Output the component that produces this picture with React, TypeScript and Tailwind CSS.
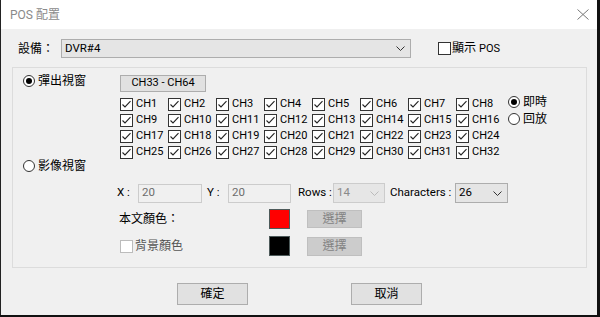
import React from "react";

const font = { fontFamily: 'Roboto, "Noto Sans CJK TC", "Noto Sans", sans-serif' };

function Check({ checked = true, disabled = false }: { checked?: boolean; disabled?: boolean }) {
  return (
    <div
      className={`w-[13px] h-[13px] shrink-0 bg-white border ${disabled ? "border-[#bcbcbc]" : "border-[#333]"} flex items-center justify-center`}
    >
      {checked && (
        <svg width="11" height="11" viewBox="0 0 11 11">
          <path d="M1.5 5.5 L4 8 L9.5 2.2" fill="none" stroke="#222" strokeWidth="1.1" />
        </svg>
      )}
    </div>
  );
}

function Radio({ checked = false }: { checked?: boolean }) {
  return (
    <div className="w-[12px] h-[12px] shrink-0 rounded-full bg-white border border-[#333] flex items-center justify-center">
      {checked && <div className="w-[6px] h-[6px] rounded-full bg-black" />}
    </div>
  );
}

function Chevron({ color = "#333" }: { color?: string }) {
  return (
    <svg width="9" height="5" viewBox="0 0 9 5">
      <path d="M0.5 0.5 L4.5 4.5 L8.5 0.5" fill="none" stroke={color} strokeWidth="1" />
    </svg>
  );
}

export default function App() {
  const chs = Array.from({ length: 32 }, (_, i) => i + 1);
  return (
    <div className="w-[600px] h-[317px] bg-[#111] overflow-hidden text-[12px] text-black whitespace-nowrap" style={font}>
      <div className="w-[597px] h-[315px] flex flex-col border-l border-[#222]">
        {/* title bar */}
        <div className="h-[29px] bg-white flex items-center justify-between pl-[9px] pr-[8px] shrink-0">
          <span className="text-[#8a8a8a] text-[12px]">POS 配置</span>
          <svg width="12" height="11" viewBox="0 0 12 11">
            <path d="M0.5 0.5 L11.5 10.5 M11.5 0.5 L0.5 10.5" stroke="#777" strokeWidth="1" fill="none" />
          </svg>
        </div>
        {/* body */}
        <div className="flex-1 bg-[#f0f0f0] flex flex-col">
          <div className="mt-[10px] h-[19px] flex items-center pl-[17px]">
            <span className="w-[43px] shrink-0">設備：</span>
            <div className="w-[350px] h-[19px] border border-[#adadad] bg-[#e5e5e5] flex items-center justify-between pl-[3px] pr-[5px] text-[11.5px]">
              <span>DVR#4</span>
              <Chevron />
            </div>
            <div className="ml-[27px] flex items-center">
              <Check checked={false} />
              <span className="ml-[1px]">顯示 <span className="text-[11px]">POS</span></span>
            </div>
          </div>

          {/* group box */}
          <div className="mt-[9px] ml-[11px] w-[575px] h-[201px] border border-[#dcdcdc] pt-[6px] pl-[10px] flex flex-col">
            <div className="flex">
              <div className="w-[97px] shrink-0">
                <div className="h-[14px] flex items-center">
                  <Radio checked />
                  <span className="ml-[3px]">彈出視窗</span>
                </div>
              </div>
              <div className="flex flex-col">
                <div className="mt-[1px] w-[86px] h-[17px] border border-[#adadad] bg-[#e1e1e1] flex items-center justify-center text-[11px]">
                  CH33 - CH64
                </div>
                <div className="mt-[4px] grid grid-cols-[repeat(8,48px)] auto-rows-[16px] text-[11px]">
                  {chs.map((n) => (
                    <div key={n} className="flex items-center">
                      <Check />
                      <span className="ml-[3px]">CH{n}</span>
                    </div>
                  ))}
                </div>
              </div>
              <div className="ml-[4px] pt-[22px] flex flex-col">
                <div className="h-[16px] flex items-start">
                  <Radio checked />
                  <span className="ml-[3px] leading-[12px]">即時</span>
                </div>
                <div className="h-[16px] flex items-start mt-[1px]">
                  <Radio />
                  <span className="ml-[3px] leading-[12px]">回放</span>
                </div>
              </div>
            </div>

            <div className="mt-[-1px] h-[14px] flex items-center">
              <Radio />
              <span className="ml-[3px]">影像視窗</span>
            </div>

            <div className="mt-[10px] ml-[94px] h-[20px] flex items-center text-[11.5px]">
              <span className="w-[21px] shrink-0">X :</span>
              <div className="w-[64px] h-[19px] shrink-0 border border-[#cccccc] bg-[#f0f0f0] text-[#6d6d6d] flex items-center pl-[3px]">20</div>
              <span className="ml-[5px] w-[21px] shrink-0">Y :</span>
              <div className="w-[63px] h-[19px] shrink-0 border border-[#cccccc] bg-[#f0f0f0] text-[#6d6d6d] flex items-center pl-[3px]">20</div>
              <span className="ml-[7px] w-[35px] shrink-0">Rows :</span>
              <div className="w-[52px] h-[20px] shrink-0 border border-[#cccccc] bg-[#e6e6e6] text-[#8a8a8a] flex items-center justify-between pl-[3px] pr-[5px]">
                <span>14</span>
                <Chevron color="#bbb" />
              </div>
              <span className="ml-[5px] w-[65px] shrink-0">Characters :</span>
              <div className="w-[53px] h-[20px] shrink-0 border border-[#adadad] bg-[#e5e5e5] flex items-center justify-between pl-[3px] pr-[5px]">
                <span>26</span>
                <Chevron />
              </div>
            </div>

            <div className="mt-[6px] ml-[96px] h-[20px] flex items-center">
              <span className="w-[150px] shrink-0">本文顏色：</span>
              <div className="w-[21px] h-[20px] shrink-0 border border-[#4d5a5a] bg-[#ff0000]" />
              <div className="ml-[17px] w-[55px] h-[18px] shrink-0 border border-[#bfbfbf] bg-[#cccccc] text-[#838383] flex items-center justify-center">
                選擇
              </div>
            </div>

            <div className="mt-[7px] ml-[97px] h-[20px] flex items-center">
              <div className="w-[149px] shrink-0 flex items-center">
                <Check checked={false} disabled />
                <span className="ml-[2px] text-[#555]">背景顏色</span>
              </div>
              <div className="w-[21px] h-[20px] shrink-0 border border-[#4d5a5a] bg-black" />
              <div className="ml-[17px] w-[55px] h-[19px] shrink-0 border border-[#bfbfbf] bg-[#cccccc] text-[#838383] flex items-center justify-center">
                選擇
              </div>
            </div>
          </div>

          <div className="mt-[15px] flex">
            <div className="ml-[176px] w-[71px] h-[22px] border border-[#adadad] bg-[#e1e1e1] flex items-center justify-center">
              確定
            </div>
            <div className="ml-[103px] w-[71px] h-[22px] border border-[#adadad] bg-[#e1e1e1] flex items-center justify-center">
              取消
            </div>
          </div>
        </div>
      </div>
    </div>
  );
}
